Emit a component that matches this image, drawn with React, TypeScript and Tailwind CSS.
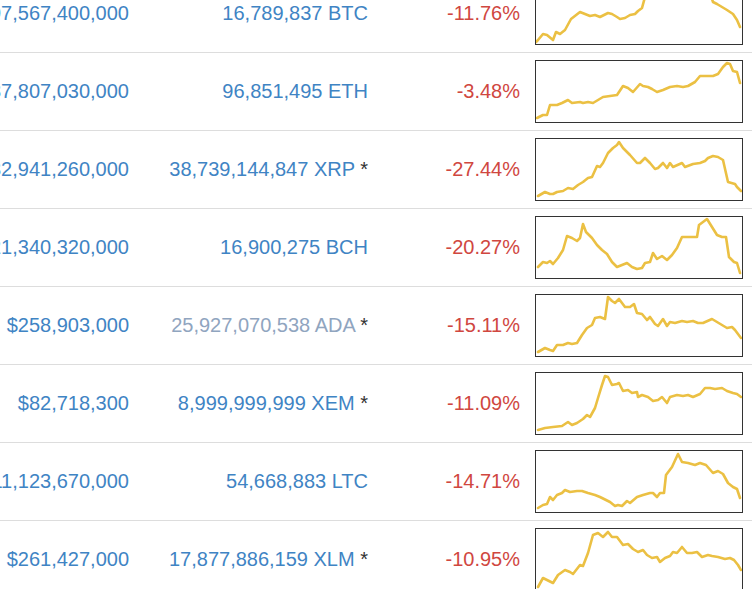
type Coin = {
  cap: string;
  supply: string;
  star?: boolean;
  muted?: boolean;
  change: string;
  spark: number[][];
};

const coins: Coin[] = [
  {
    cap: "$197,567,400,000",
    supply: "16,789,837 BTC",
    change: "-11.76%",
    spark: [
      [1, 60], [3, 58], [8, 52], [12, 53], [18, 58], [21, 50], [25, 52], [30, 48], [36, 37], [45, 30], [55, 34],
      [60, 33], [65, 35], [73, 31], [77, 32], [82, 35], [85, 37], [90, 36], [95, 33], [100, 32], [103, 29],
      [107, 26], [110, 15], [114, 8], [120, 6], [128, 9], [135, 4], [142, 7], [150, 3], [158, 5], [165, 2],
      [172, 8], [176, 14], [178, 20], [182, 22], [187, 25], [192, 28], [198, 32], [202, 38], [205, 45],
    ],
  },
  {
    cap: "$87,807,030,000",
    supply: "96,851,495 ETH",
    change: "-3.48%",
    spark: [
      [2, 58], [8, 55], [12, 55], [15, 45], [22, 45], [27, 43], [33, 40], [37, 43], [45, 42], [48, 43], [53, 42],
      [58, 43], [63, 40], [68, 37], [75, 36], [82, 35], [88, 26], [93, 28], [98, 32], [105, 24], [108, 26],
      [113, 27], [117, 29], [122, 32], [128, 30], [135, 27], [142, 26], [148, 27], [153, 26], [160, 22],
      [165, 16], [172, 16], [178, 16], [183, 14], [188, 7], [192, 3], [195, 4], [198, 11], [202, 12], [205, 23],
    ],
  },
  {
    cap: "$32,941,260,000",
    supply: "38,739,144,847 XRP",
    star: true,
    change: "-27.44%",
    spark: [
      [3, 58], [10, 54], [15, 56], [18, 56], [22, 54], [28, 53], [33, 50], [38, 51], [43, 47], [48, 44], [53, 40],
      [57, 39], [62, 28], [65, 29], [68, 25], [73, 15], [78, 10], [82, 7], [84, 4], [88, 10], [95, 17], [102, 25],
      [105, 25], [110, 20], [115, 25], [120, 31], [123, 30], [128, 25], [132, 30], [135, 25], [138, 29],
      [147, 25], [150, 29], [158, 26], [165, 25], [170, 23], [173, 20], [178, 18], [183, 19], [188, 22],
      [193, 44], [200, 46], [202, 49], [206, 53],
    ],
  },
  {
    cap: "$21,340,320,000",
    supply: "16,900,275 BCH",
    change: "-20.27%",
    spark: [
      [3, 51], [8, 46], [12, 47], [15, 45], [18, 48], [23, 42], [28, 34], [32, 20], [37, 22], [42, 25], [45, 22],
      [48, 8], [51, 16], [57, 22], [62, 29], [67, 34], [72, 38], [77, 46], [82, 51], [87, 49], [92, 47],
      [97, 51], [102, 53], [107, 52], [110, 47], [115, 46], [118, 37], [122, 43], [127, 40], [132, 44],
      [137, 39], [142, 32], [147, 21], [153, 21], [158, 21], [162, 21], [164, 9], [172, 3], [177, 11],
      [182, 19], [187, 21], [191, 21], [194, 41], [199, 46], [202, 47], [205, 57],
    ],
  },
  {
    cap: "$258,903,000",
    supply: "25,927,070,538 ADA",
    star: true,
    muted: true,
    change: "-15.11%",
    spark: [
      [3, 58], [10, 54], [15, 56], [18, 57], [22, 51], [28, 51], [33, 49], [37, 50], [42, 49], [47, 41], [52, 34],
      [57, 31], [60, 24], [65, 23], [70, 25], [73, 3], [77, 7], [80, 9], [84, 5], [90, 13], [95, 13], [99, 10],
      [102, 19], [107, 20], [112, 26], [115, 23], [120, 30], [123, 32], [128, 25], [132, 32], [135, 28],
      [140, 29], [147, 27], [152, 28], [158, 27], [163, 29], [168, 29], [177, 25], [182, 28], [187, 31],
      [192, 34], [197, 33], [200, 36], [206, 44],
    ],
  },
  {
    cap: "$82,718,300",
    supply: "8,999,999,999 XEM",
    star: true,
    change: "-11.09%",
    spark: [
      [3, 58], [10, 56], [18, 55], [27, 54], [30, 52], [33, 50], [37, 53], [42, 51], [48, 47], [52, 43], [55, 45],
      [60, 36], [63, 26], [67, 13], [70, 4], [73, 5], [77, 13], [82, 12], [84, 11], [88, 19], [93, 18], [97, 21],
      [102, 20], [103, 25], [107, 23], [113, 25], [118, 29], [123, 28], [127, 25], [132, 31], [135, 25],
      [142, 23], [148, 24], [153, 23], [158, 25], [165, 22], [170, 16], [175, 16], [180, 17], [187, 16],
      [192, 19], [198, 21], [202, 22], [206, 25],
    ],
  },
  {
    cap: "$11,123,670,000",
    supply: "54,668,883 LTC",
    change: "-14.71%",
    spark: [
      [3, 58], [8, 55], [12, 54], [15, 47], [18, 50], [22, 45], [27, 43], [30, 40], [35, 42], [42, 41], [47, 41],
      [53, 43], [60, 45], [65, 47], [75, 52], [80, 56], [83, 55], [87, 56], [92, 51], [95, 53], [102, 47],
      [108, 45], [115, 43], [118, 43], [122, 47], [125, 43], [129, 43], [131, 25], [137, 17], [143, 4],
      [147, 12], [153, 13], [160, 15], [165, 13], [171, 15], [178, 23], [183, 21], [188, 24], [193, 33],
      [198, 37], [202, 39], [205, 48],
    ],
  },
  {
    cap: "$261,427,000",
    supply: "17,877,886,159 XLM",
    star: true,
    change: "-10.95%",
    spark: [
      [3, 59], [8, 50], [12, 52], [18, 55], [23, 47], [30, 42], [35, 44], [38, 46], [45, 37], [48, 38], [53, 25],
      [58, 7], [63, 5], [68, 9], [73, 4], [77, 9], [82, 9], [88, 17], [93, 16], [98, 21], [103, 24], [108, 22],
      [112, 27], [117, 30], [122, 29], [125, 34], [130, 30], [135, 28], [138, 24], [142, 25], [147, 19],
      [152, 25], [157, 25], [162, 24], [167, 29], [173, 27], [177, 28], [183, 29], [190, 31], [195, 30],
      [199, 32], [203, 37], [206, 42],
    ],
  },
];

const Sparkline = ({ points }: { points: number[][] }) => (
  <div className="w-[208px] h-[63px] border border-[#333] bg-white shrink-0 overflow-hidden">
    <svg width="206" height="61" viewBox="1 1 206 61" className="block">
      <polyline
        points={points.map((p) => p.join(",")).join(" ")}
        fill="none"
        stroke="#ebc043"
        strokeWidth="2.6"
        strokeLinejoin="round"
        strokeLinecap="round"
      />
    </svg>
  </div>
);

const CoinRow = ({ coin }: { coin: Coin }) => (
  <div className="flex items-center h-[78px] border-b border-[#dddddd]">
    <div className="w-[129px] shrink-0 flex justify-end pb-[2px]">
      <span className="shrink-0 whitespace-nowrap text-[#3f84c4]">{coin.cap}</span>
    </div>
    <div className="w-[239px] shrink-0 flex justify-end pb-[2px]">
      <span className="shrink-0 whitespace-nowrap">
        <span className={coin.muted ? "text-[#90a5bf]" : "text-[#3f84c4]"}>{coin.supply}</span>
        {coin.star && <span className="text-[#333]"> *</span>}
      </span>
    </div>
    <div className="w-[152px] shrink-0 flex justify-end pb-[2px]">
      <span className="whitespace-nowrap text-[#d0473f]">{coin.change}</span>
    </div>
    <div className="pl-[15px]">
      <Sparkline points={coin.spark} />
    </div>
  </div>
);

export default function App() {
  return (
    <div className="w-[752px] h-[589px] overflow-hidden bg-white font-['Liberation_Sans',Arial,sans-serif] text-[20px] leading-[24px]">
      <div className="-mt-[25px]">
        {coins.map((coin) => (
          <CoinRow key={coin.supply} coin={coin} />
        ))}
      </div>
    </div>
  );
}
